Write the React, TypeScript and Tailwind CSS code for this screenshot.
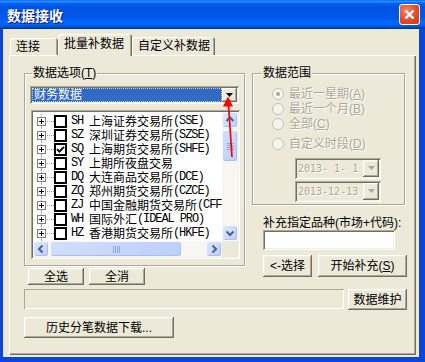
import React from 'react';

const raised =
    'shadow-[inset_-1px_-1px_#716f64,inset_1px_1px_#fff,inset_-2px_-2px_#aca899,inset_2px_2px_#f1efe2]';
const sunken =
    'shadow-[inset_1px_1px_#aca899,inset_-1px_-1px_#fff,inset_2px_2px_#716f64,inset_-2px_-2px_#f1efe2]';
const etched = 'border border-[#aca899] shadow-[1px_1px_0_#fff,inset_1px_1px_0_#fff]';
const mono = "font-['Liberation_Mono',monospace] text-[12px] tracking-[-1.1px]";
const grayText = 'text-[#aca899] [text-shadow:1px_1px_0_#fff]';

interface Market {
    code: string;
    name: string;
    suffix?: string;
    checked?: boolean;
}

const markets: Market[] = [
    { code: 'SH', name: '上海证券交易所', suffix: '(SSE)' },
    { code: 'SZ', name: '深圳证券交易所', suffix: '(SZSE)' },
    { code: 'SQ', name: '上海期货交易所', suffix: '(SHFE)', checked: true },
    { code: 'SY', name: '上期所夜盘交易' },
    { code: 'DQ', name: '大连商品交易所', suffix: '(DCE)' },
    { code: 'ZQ', name: '郑州期货交易所', suffix: '(CZCE)' },
    { code: 'ZJ', name: '中国金融期货交易所', suffix: '(CFFEX)' },
    { code: 'WH', name: '国际外汇', suffix: '(IDEAL PRO)' },
    { code: 'HZ', name: '香港期货交易所', suffix: '(HKFE)' },
    { code: 'XG', name: '新加坡交易所', suffix: '(SGX)' },
];

const TitleBar: React.FC = () => (
    <div className="flex h-[29px] shrink-0 items-center justify-between bg-[linear-gradient(to_bottom,#0058ee_0%,#3593ff_4%,#288eff_6%,#127dff_8%,#036ffc_10%,#0262ee_14%,#0057e5_20%,#0054e3_24%,#0055eb_56%,#005bf5_66%,#026afe_76%,#0062ef_86%,#0052d6_92%,#0040ab_97%,#003092_100%)] pl-[7px] pr-[5px]">
        <span className="font-['Noto_Sans_CJK_SC',sans-serif] text-[14px] font-bold leading-none text-white [text-shadow:1px_1px_#0f1089]">
            数据接收
        </span>
        <div className="flex h-[21px] w-[21px] items-center justify-center rounded-[3px] border border-white bg-[radial-gradient(circle_at_35%_30%,#f3886a_0%,#e2492b_55%,#cc3717_100%)]">
            <svg width="13" height="13" viewBox="0 0 13 13">
                <path d="M2.5 2.5L10.5 10.5M10.5 2.5L2.5 10.5" stroke="#fff" strokeWidth="2.4" />
            </svg>
        </div>
    </div>
);

const Tabs: React.FC = () => {
    const tab = 'flex items-center rounded-t-[3px] bg-[#ece9d8] pl-[6px] shadow-[inset_1px_1px_#fff,inset_-1px_0_#716f64,inset_-2px_0_#aca899]';
    return (
        <div className="flex h-[21px] shrink-0 items-end pl-[1px]">
            <div className={`${tab} h-[17px] w-[48px]`}>连接</div>
            <div className={`${tab} relative z-10 -mb-[1px] h-[22px] w-[74px] pb-[2px]`}>批量补数据</div>
            <div className={`${tab} h-[18px] w-[83px]`}>自定义补数据</div>
        </div>
    );
};

const Arrow: React.FC<{ dir: 'up' | 'down' | 'left' | 'right' }> = ({ dir }) => {
    const d = {
        up: 'M3.5 8L7 4.5L10.5 8',
        down: 'M3.5 5.5L7 9L10.5 5.5',
        left: 'M8.5 3.5L5 7L8.5 10.5',
        right: 'M5.5 3.5L9 7L5.5 10.5',
    }[dir];
    return (
        <div className="flex h-[16px] w-[16px] shrink-0 items-center justify-center rounded-[3px] border border-[#f4f8ff] bg-[linear-gradient(135deg,#dde8fe,#bccffa)] shadow-[inset_-1px_-1px_#aabdf0]">
            <svg width="14" height="14" viewBox="0 0 14 14">
                <path d={d} fill="none" stroke="#4d6185" strokeWidth="2" />
            </svg>
        </div>
    );
};

const thumb =
    'rounded-[3px] border border-[#f4f8ff] bg-[linear-gradient(135deg,#d2defd,#bccffa)] shadow-[inset_-1px_-1px_#aabdf0] flex items-center justify-center';

const TreeRow: React.FC<{ m: Market }> = ({ m }) => (
    <div className="flex h-[14px] shrink-0 items-center whitespace-nowrap">
        <div className="ml-[4px] flex h-full w-[9px] shrink-0 flex-col items-center">
            <div className="h-[3px] border-l border-dotted border-[#a0a0a0]" />
            <div className="flex h-[9px] w-[9px] shrink-0 items-center justify-center border border-[#808080] bg-white">
                <svg width="7" height="7" viewBox="0 0 7 7" shapeRendering="crispEdges">
                    <path d="M1 3.5h5M3.5 1v5" stroke="#000" />
                </svg>
            </div>
            <div className="flex-1 border-l border-dotted border-[#a0a0a0]" />
        </div>
        <div className="ml-[1px] w-[7px] shrink-0 border-t border-dotted border-[#a0a0a0]" />
        <div className="flex h-[13px] w-[13px] shrink-0 items-center justify-center border-2 border-black bg-white">
            {m.checked && (
                <svg width="9" height="9" viewBox="0 0 9 9">
                    <path d="M1 4.2L3.4 6.6L8 1.8" fill="none" stroke="#000" strokeWidth="1.8" />
                </svg>
            )}
        </div>
        <span className={`ml-[4px] w-[18px] shrink-0 leading-[14px] ${mono}`}>{m.code}</span>
        <span className="font-['Noto_Sans_CJK_SC',sans-serif] leading-[14px]">{m.name}</span>
        {m.suffix && <span className={`whitespace-pre leading-[14px] ${mono}`}>{m.suffix}</span>}
    </div>
);

const Radio: React.FC<{ label: string; k: string; checked?: boolean; className?: string }> = ({
    label,
    k,
    checked,
    className = '',
}) => (
    <div className={`flex h-[15px] shrink-0 items-center ${className}`}>
        <div className="ml-[19px] flex h-[12px] w-[12px] items-center justify-center rounded-full border border-[#c4c2b4] bg-[#f4f3ee]">
            {checked && <div className="h-[4px] w-[4px] rounded-full bg-[#aca899]" />}
        </div>
        <span className={`ml-[5px] ${grayText}`}>
            {label}(<span className="underline">{k}</span>)
        </span>
    </div>
);

const DateBox: React.FC<{ value: string; className?: string }> = ({ value, className = '' }) => (
    <div className={`ml-[42px] flex h-[21px] w-[86px] shrink-0 items-center justify-between bg-[#ece9d8] p-[2px] ${sunken} ${className}`}>
        <span className={`whitespace-pre pl-[1px] font-['DejaVu_Sans_Mono',monospace] text-[10px] ${grayText}`}>
            {value}
        </span>
        <div className={`flex h-[17px] w-[16px] items-center justify-center bg-[#ece9d8] ${raised}`}>
            <svg width="7" height="5" viewBox="0 0 7 5">
                <path d="M0 0h7L3.5 4z" fill="#aca899" />
            </svg>
        </div>
    </div>
);

const Button: React.FC<{ className?: string; children: React.ReactNode }> = ({ className = '', children }) => (
    <button type="button" className={`flex shrink-0 items-center justify-center bg-[#ece9d8] ${raised} ${className}`}>
        {children}
    </button>
);

export default function App() {
    return (
        <div className="relative flex h-[362px] w-[425px] flex-col overflow-hidden bg-[#0b45dc] font-['Liberation_Sans','Noto_Sans_CJK_SC',sans-serif] text-[12px] leading-[14px] text-black">
            <TitleBar />

            <div className="mb-[5px] ml-[3px] mr-[6px] flex flex-1 flex-col bg-[#ece9d8] pb-[2px] pl-[6px] pr-[3px] pt-[5px]">
                <Tabs />

                <div className="flex flex-1 flex-col bg-[#ece9d8] pl-[15px] pt-[11px] shadow-[inset_1px_1px_#fff,inset_-1px_-1px_#716f64,inset_-2px_-2px_#aca899]">
                    <div className="flex gap-[7px]">
                        {/* left column */}
                        <div className="flex w-[221px] flex-col">
                            <fieldset className={`h-[200px] w-[221px] ${etched}`}>
                                <legend className="ml-[7px] bg-[#ece9d8] px-[1px] leading-[14px]">
                                    数据选项(<span className="underline">T</span>)
                                </legend>

                                <div className={`ml-[5px] mt-[6px] flex h-[18px] w-[209px] bg-white p-[2px] ${sunken}`}>
                                    <div className="flex flex-1 items-center border border-dotted border-[#c9d3e8] bg-[#316ac5] pl-[1px] text-white">
                                        财务数据
                                    </div>
                                    <div className={`flex w-[15px] items-center justify-center bg-[#ece9d8] ${raised}`}>
                                        <svg width="7" height="4" viewBox="0 0 7 4">
                                            <path d="M0 0h7L3.5 4z" fill="#000" />
                                        </svg>
                                    </div>
                                </div>

                                <div className={`ml-[6px] mt-[6px] flex h-[149px] w-[209px] flex-col bg-white p-[2px] ${sunken}`}>
                                    <div className="flex min-h-0 flex-1">
                                        <div className="flex min-w-0 flex-1 flex-col overflow-hidden pt-[2px]">
                                            {markets.map(m => (
                                                <TreeRow key={m.code} m={m} />
                                            ))}
                                        </div>
                                        <div className="flex w-[16px] shrink-0 flex-col bg-[#f7f6f1]">
                                            <Arrow dir="up" />
                                            <div className={`mt-[2px] h-[32px] ${thumb}`}>
                                                <div className="flex w-[7px] flex-col gap-[1px]">
                                                    <div className="h-[1px] bg-[#8ea6de]" />
                                                    <div className="h-[1px] bg-[#8ea6de]" />
                                                    <div className="h-[1px] bg-[#8ea6de]" />
                                                    <div className="h-[1px] bg-[#8ea6de]" />
                                                </div>
                                            </div>
                                            <div className="flex-1" />
                                            <Arrow dir="down" />
                                        </div>
                                    </div>
                                    <div className="flex h-[16px] shrink-0">
                                        <div className="flex flex-1 bg-[#f7f6f1]">
                                            <Arrow dir="left" />
                                            <div className={`ml-[1px] w-[132px] ${thumb}`}>
                                                <div className="flex h-[7px] gap-[1px]">
                                                    <div className="w-[1px] bg-[#8ea6de]" />
                                                    <div className="w-[1px] bg-[#8ea6de]" />
                                                    <div className="w-[1px] bg-[#8ea6de]" />
                                                    <div className="w-[1px] bg-[#8ea6de]" />
                                                </div>
                                            </div>
                                            <div className="flex-1" />
                                            <Arrow dir="right" />
                                        </div>
                                        <div className="w-[16px] bg-[#ece9d8]" />
                                    </div>
                                </div>
                            </fieldset>

                            <div className="ml-[4px] mt-[2px] flex gap-[5px]">
                                <Button className="h-[17px] w-[56px]">全选</Button>
                                <Button className="h-[17px] w-[56px]">全消</Button>
                            </div>
                        </div>

                        {/* right column */}
                        <div className="flex w-[155px] flex-col">
                            <fieldset className={`h-[139px] w-[153px] ${etched}`}>
                                <legend className="ml-[9px] bg-[#ece9d8] px-[1px] leading-[14px]">数据范围</legend>
                                <div className="flex flex-col pt-[6px]">
                                    <Radio label="最近一星期" k="A" checked />
                                    <Radio label="最近一个月" k="B" />
                                    <Radio label="全部" k="C" />
                                    <Radio className="mt-[5px]" label="自定义时段" k="D" />
                                    <DateBox className="mt-[7px]" value="2013- 1- 1" />
                                    <DateBox className="mt-[2px]" value="2013-12-13" />
                                </div>
                            </fieldset>

                            <div className="ml-[11px] mt-[11px] whitespace-nowrap">补充指定品种(市场+代码):</div>
                            <div className={`ml-[11px] h-[20px] w-[132px] bg-white ${sunken}`} />
                            <div className="ml-[11px] mt-[5px] flex gap-[6px]">
                                <Button className="h-[22px] w-[49px]">&lt;-选择</Button>
                                <Button className="h-[22px] w-[89px]">
                                    开始补充(<span className="underline">S</span>)
                                </Button>
                            </div>
                        </div>
                    </div>

                    <div className="mt-[4px] flex items-start gap-[4px]">
                        <div className="h-[20px] w-[320px] shadow-[inset_1px_1px_#aca899,inset_-1px_-1px_#fff]" />
                        <Button className="h-[21px] w-[59px]">数据维护</Button>
                    </div>

                    <Button className="mt-[7px] h-[21px] w-[150px]">历史分笔数据下载...</Button>
                </div>
            </div>

            <svg className="pointer-events-none absolute left-0 top-0" width="425" height="362">
                <path d="M228.5 105L232 157" stroke="#f00" strokeWidth="1.7" />
                <path d="M228 96.5L223 106.5H233Z" fill="#f00" />
            </svg>
        </div>
    );
}
